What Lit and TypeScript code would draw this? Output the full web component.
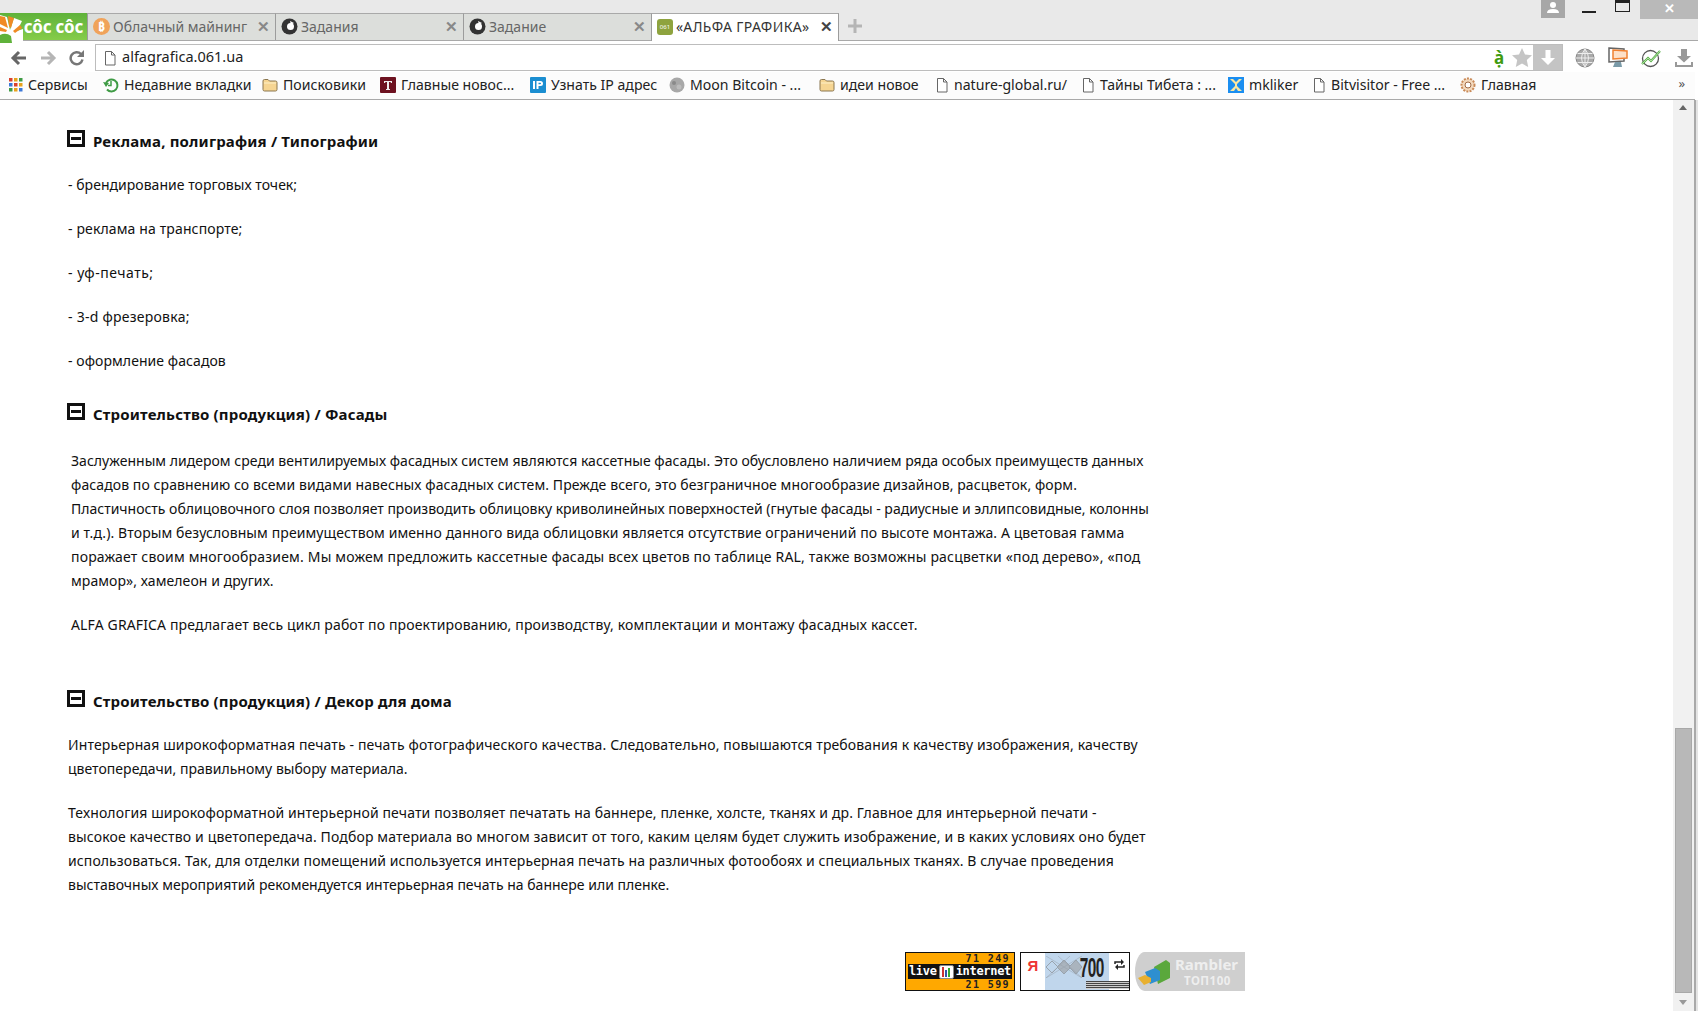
import { LitElement, html, css, svg } from "lit";
import { customElement } from "lit/decorators.js";

const fileIcon = svg`<svg width="14" height="16" viewBox="0 0 14 16"><path d="M2.5 1.5h6l3.500 3.500v10h-9.500z M8.500 1.500v3.500h3.500" fill="#fff" stroke="#666" stroke-width="1"/></svg>`;
const folderIcon = svg`<svg width="16" height="14" viewBox="0 0 16 14"><path d="M1 3q0-1.500 1.500-1.500h3.500l1.500 1.500h6q1.500 0 1.500 1.500v7q0 1.500-1.500 1.500h-11q-1.500 0-1.500-1.500z" fill="#f6d592" stroke="#8a7650"/><path d="M2 5h12" stroke="#fdf0c8"/></svg>`;
const dial = svg`<svg width="17" height="17" viewBox="0 0 17 17"><circle cx="8.500" cy="8.500" r="8" fill="#333"/><circle cx="9.500" cy="8.500" r="3.500" fill="#fff"/><path d="M9 3l4 2-3 2z" fill="#fff"/></svg>`;

const bookmarks: [any, string, number][] = [
  [svg`<svg width="14" height="14" viewBox="0 0 14 14">${[0, 5, 10].flatMap((y, r) => [0, 5, 10].map((x, c) => svg`<rect x="${x}" y="${y}" width="3.500" height="3.500" fill="${["#d9412f", "#e8a21c", "#3f9b45", "#3c78d8", "#d9412f", "#e8a21c", "#3f9b45", "#e8a21c", "#3c78d8"][r * 3 + c]}"/>`))}</svg>`, "Сервисы", 94],
  [svg`<svg width="16" height="16" viewBox="0 0 16 16"><path d="M3 6a6 6 0 1 1 1 6.500" fill="none" stroke="#3f9b45" stroke-width="2"/><path d="M0 5l6 1-3 4z" fill="#3f9b45"/><path d="M8 4v4.500h-3" fill="none" stroke="#3f9b45" stroke-width="1.500"/></svg>`, "Недавние вкладки", 159],
  [folderIcon, "Поисковики", 118],
  [svg`<svg width="16" height="16" viewBox="0 0 16 16"><rect width="16" height="16" rx="1" fill="#6d1220"/><path d="M4 4h8v2h-1l-.5-1h-1.500v7h1v1h-4v-1h1v-7h-1.500l-.5 1h-1z" fill="#eee"/></svg>`, "Главные новос...", 150],
  [svg`<svg width="16" height="16" viewBox="0 0 16 16"><rect width="16" height="16" rx="1" fill="#1b8ed1"/><path d="M3 4h2v8h-2z M6.500 4h4q2.500 0 2.500 2.500t-2.500 2.500h-2v3h-2z M8.500 5.800v1.500h1.500q1 0 1-.8t-1-.7z" fill="#fff"/></svg>`, "Узнать IP адрес", 139],
  [svg`<svg width="16" height="16" viewBox="0 0 16 16"><circle cx="8" cy="8" r="7.500" fill="#a8a8a8"/><circle cx="5" cy="6" r="2" fill="#8a8a8a"/><circle cx="10" cy="10" r="2.500" fill="#bcbcbc"/></svg>`, "Moon Bitcoin - ...", 150],
  [folderIcon, "идеи новое", 116],
  [fileIcon, "nature-global.ru/", 146],
  [fileIcon, "Тайны Тибета : ...", 147],
  [svg`<svg width="16" height="16" viewBox="0 0 16 16"><rect width="16" height="16" fill="#1b8ef0"/><path d="M2 2l5 5v2l-5 5h4l2-3 2 3h4l-5-5v-2l5-5h-3l-3 3-3-3z" fill="#fbe7a0"/></svg>`, "mkliker", 84],
  [fileIcon, "Bitvisitor - Free ...", 148],
  [svg`<svg width="16" height="16" viewBox="0 0 16 16"><circle cx="8" cy="8" r="6.500" fill="#f3d9bd" stroke="#c98a58" stroke-width="2" stroke-dasharray="2 1.200"/><circle cx="8" cy="8" r="3" fill="#fff" stroke="#a06a45"/></svg>`, "Главная", 90],
];

const ln = (text: string, ls: number) => html`<span class="ln" style="letter-spacing:${ls}px">${text}</span>`;

const fasady: [string, number][] = [
  ["Заслуженным лидером среди вентилируемых фасадных систем являются кассетные фасады. Это обусловлено наличием ряда особых преимуществ данных", 0.03],
  ["фасадов по сравнению со всеми видами навесных фасадных систем. Прежде всего, это безграничное многообразие дизайнов, расцветок, форм.", 0.09],
  ["Пластичность облицовочного слоя позволяет производить облицовку криволинейных поверхностей (гнутые фасады - радиусные и эллипсовидные, колонны", -0.008],
  ["и т.д.). Вторым безусловным преимуществом именно данного вида облицовки является отсутствие ограничений по высоте монтажа. А цветовая гамма", 0.1],
  ["поражает своим многообразием. Мы можем предложить кассетные фасады всех цветов по таблице RAL, также возможны расцветки «под дерево», «под", 0.185],
  ["мрамор», хамелеон и других.", 0.08],
];
const decor1: [string, number][] = [
  ["Интерьерная широкоформатная печать - печать фотографического качества. Следовательно, повышаются требования к качеству изображения, качеству", 0.125],
  ["цветопередачи, правильному выбору материала.", 0.024],
];
const decor2: [string, number][] = [
  ["Технология широкоформатной интерьерной печати позволяет печатать на баннере, пленке, холсте, тканях и др. Главное для интерьерной печати -", 0.125],
  ["высокое качество и цветопередача. Подбор материала во многом зависит от того, каким целям будет служить изображение, и в каких условиях оно будет", 0.145],
  ["использоваться. Так, для отделки помещений используется интерьерная печать на различных фотообоях и специальных тканях. В случае проведения", 0.1],
  ["выставочных мероприятий рекомендуется интерьерная печать на баннере или пленке.", 0.01],
];
const bullets: [string, number][] = [
  ["- брендирование торговых точек;", 0.03],
  ["- реклама на транспорте;", 0.13],
  ["- уф-печать;", 0.5],
  ["- 3-d фрезеровка;", 0.25],
  ["- оформление фасадов", 0.07],
];

@customElement("app-root")
export class AppRoot extends LitElement {
  static styles = css`
    :host { display: block; width: 1698px; height: 1011px; overflow: hidden; background: #fff; font-family: "Noto Sans", sans-serif; color: #111; }
    .frame { display: flex; flex-direction: column; height: 1011px; }

    .titlebar { position: relative; height: 41px; flex: none; background: #e9e9e9; box-sizing: border-box; padding-top: 13px; display: flex; align-items: stretch; border-bottom: 1px solid #a9a9a9; }
    .brand { width: 87px; background: linear-gradient(#5fb23a, #86cc4a); position: relative; color: #fff; font: bold 17px/27px "Noto Sans", sans-serif; text-align: right; padding-right: 4px; box-sizing: border-box; white-space: nowrap; letter-spacing: -0.2px; z-index: 1; }
    .brand svg { position: absolute; left: 0; top: 0; }
    .tab { width: 188px; box-sizing: border-box; border-left: 1px solid #9c9c9c; border-top: 1px solid #a9a9a9; background: #dcdedb; display: flex; align-items: center; padding: 0 5px 2px 5px; gap: 3px; font-size: 14px; color: #666; white-space: nowrap; }
    .tab .label { flex: 1; overflow: hidden; }
    .tab .x { color: #888; font-size: 15px; font-weight: bold; line-height: 1; }
    .tab.active { background: #fff; color: #333; height: 28px; margin-bottom: -1px; border-right: 1px solid #9c9c9c; position: relative; padding-top: 0; }
    .tab.active .label { letter-spacing: 0.38px; }
    .tab.active .x { color: #444; }
    .favicon { width: 16px; height: 16px; border-radius: 3px; background: #8ea33e; color: #fff; font-size: 6px; text-align: center; line-height: 16px; flex: none; }
    .btc { width: 17px; height: 17px; border-radius: 50%; background: #f0a35a; color: #fff; font-size: 12px; font-weight: bold; text-align: center; line-height: 17px; flex: none; }
    .plus { margin-left: 9px; align-self: center; margin-bottom: 1px; }

    .winctl { position: absolute; top: 0; right: 0; height: 19px; width: 158px; }
    .user { position: absolute; left: 1px; top: 0; width: 24px; height: 18px; background: #a7a7a7; }
    .min { position: absolute; left: 42px; top: 11px; width: 14px; height: 2px; background: #222; }
    .max { position: absolute; left: 75px; top: 0; width: 13px; height: 8px; border: 1px solid #222; border-top-width: 3px; }
    .close { position: absolute; left: 100px; top: 0; width: 58px; height: 19px; background: #b9b9b9; color: #fff; font: bold 13px/17px "Noto Sans", sans-serif; text-align: center; }

    .toolbar { height: 31px; flex: none; display: flex; align-items: flex-end; padding-bottom: 1px; box-sizing: border-box; background: #fff; margin-right: 3px; }
    .nav { width: 95px; height: 27px; display: flex; align-items: center; padding-left: 10px; gap: 12.500px; box-sizing: border-box; flex: none; }
    .omni { width: 1468px; height: 27px; flex: none; border: 1px solid #bdbdbd; box-sizing: border-box; display: flex; align-items: center; padding-left: 7px; font-size: 14.500px; color: #222; position: relative; }
    .omni .url { flex: 1; margin-left: 5px; line-height: 23px; height: 25px; }
    .omni .a { color: #3f9b10; font-weight: bold; font-size: 17px; width: 20px; text-align: center; margin-right: 3px; }
    .star { margin-right: 1px; }
    .dl { width: 29px; height: 25px; background: #c4c4c4; display: flex; align-items: center; justify-content: center; }
    .ext { display: flex; gap: 13px; padding-left: 12px; align-items: center; height: 27px; }

    .bookmarks { height: 28px; flex: none; box-sizing: border-box; display: flex; align-items: center; padding: 0 0 2px 9px; border-bottom: 1px solid #a9a9a9; font-size: 14.100px; color: #222; white-space: nowrap; background: #fcfcfc; position: relative; margin-right: 3px; }
    .bm { display: flex; align-items: center; gap: 5px; flex: none; }
    .more { position: absolute; right: 10px; top: 2px; color: #555; font-size: 13px; }

    .viewport { flex: 1; display: flex; min-height: 0; }
    .content { flex: 1; position: relative; padding: 0 0 0 68px; font-size: 14px; line-height: 24px; color: #111; box-sizing: border-box; }
    .sec-head { display: flex; align-items: flex-start; gap: 8px; font-size: 15px; line-height: 22px; letter-spacing: 0.17px; font-weight: bold; height: 24px; margin: 0 0 19px -1px; white-space: nowrap; }
    .sec-head.tight { margin-bottom: 22px; }
    .minus { width: 18px; height: 17px; box-sizing: border-box; border: 3px solid #111; position: relative; flex: none; }
    .minus::after { content: ""; position: absolute; left: 1px; right: 1px; top: 4px; height: 3px; background: #111; }
    p { margin: 0 0 20px; white-space: nowrap; }
    .ln { display: block; }
    .indent { padding-left: 3px; }
    .badges { position: absolute; left: 905px; top: 852px; display: flex; gap: 5px; }

    .li { width: 110px; height: 39px; box-sizing: border-box; border: 1px solid #111; background: #ffa800; font: bold 10px/11px "DejaVu Sans Mono", monospace; color: #222; text-align: right; }
    .li .num { padding-right: 4px; letter-spacing: 1.400px; }
    .li .strip { background: #111; color: #fff; font: bold 12px/15px "DejaVu Sans Mono", monospace; margin: 0 2px; display: flex; align-items: center; justify-content: center; gap: 2px; letter-spacing: -0.3px; height: 15px; }
    .li .strip i { display: flex; align-items: flex-end; gap: 1px; width: 15px; height: 14px; box-sizing: border-box; padding: 1px 2px; border: 1px solid #888; background: #fff; border-radius: 2px; flex: none; }
    .li .strip b { width: 2px; display: block; }

    .ya { width: 110px; height: 39px; box-sizing: border-box; border: 1px solid #111; background: #fff; display: flex; position: relative; overflow: hidden; }
    .ya .y { width: 24px; color: #e33; font: bold 15px/26px "Liberation Sans", sans-serif; text-align: center; flex: none; }
    .ya .blue { width: 64px; flex: none; background: #c0d6ec; position: relative; }
    .ya .blue svg { position: absolute; left: 1px; top: 3px; }
    .ya .seven { position: absolute; right: 5px; top: 0; font: bold 28px/30px "Liberation Sans", sans-serif; color: #222; transform: scaleX(0.55); transform-origin: right center; letter-spacing: -1px; }
    .ya .r { flex: 1; display: flex; justify-content: center; padding-top: 6px; }
    .ya .lines { position: absolute; right: 0; bottom: 1px; width: 43px; height: 8px; background: repeating-linear-gradient(#444 0 1px, #ccc 1px 2px); }

    .ra { width: 110px; height: 39px; background: #cfcfcf; color: #eee; position: relative; font: bold 15px/21px "Noto Sans", sans-serif; padding: 2px 0 0 40px; box-sizing: border-box; border-radius: 10px 0 0 10px / 20px 0 0 20px; }
    .ra small { display: block; font-size: 11.500px; line-height: 11px; padding-left: 9px; letter-spacing: 0.5px; }
    .ra svg { position: absolute; left: 3px; top: 8px; }

    .scroll { width: 21px; flex: none; background: #f1f1f1; position: relative; }
    .edge { width: 4px; flex: none; background: linear-gradient(90deg, #a9a9a9 0 2px, #e4e4e4 2px); }
    .thumb { position: absolute; left: 2px; right: 2px; bottom: 18px; height: 265px; background: #b8b8b8; border: 1px solid #a8a8a8; box-sizing: border-box; }
    .arr { position: absolute; left: 6px; width: 0; height: 0; border-left: 4px solid transparent; border-right: 4px solid transparent; }
    .arr.up { top: 5px; border-bottom: 5px solid #666; }
    .arr.down { bottom: 6px; border-top: 5px solid #999; }
  `;

  render() {
    return html`<div class="frame">
      <div class="titlebar">
        <div class="brand">
          <svg width="23" height="30" viewBox="0 0 23 30"><path d="M0 2l7 2 3 13 4-12 8 3-5 10 6-2v14h-23z" fill="#fff"/><path d="M0 3l5 1 3 11-8-4z" fill="#f08a24"/><path d="M9 13l-1-10 6 2-3 10z" fill="#f08a24"/><path d="M0 14l7 3-1 2-6-1z" fill="#f08a24"/><path d="M13 18l7-6 2 3-7 5z" fill="#f08a24"/><path d="M0 22q6-3 11 1l1 7h-12z" fill="#5fb23a"/></svg>
          côc côc
        </div>
        <div class="tab"><span class="btc">₿</span><span class="label">Облачный майнинг</span><span class="x">✕</span></div>
        <div class="tab">${dial}<span class="label">Задания</span><span class="x">✕</span></div>
        <div class="tab">${dial}<span class="label">Задание</span><span class="x">✕</span></div>
        <div class="tab active"><span class="favicon">061</span><span class="label">«АЛЬФА ГРАФИКА»</span><span class="x">✕</span></div>
        <svg class="plus" width="14" height="14" viewBox="0 0 14 14"><path d="M5.500 0h3v5.500h5.500v3h-5.500v5.500h-3v-5.500h-5.500v-3h5.500z" fill="#b5b5b5"/></svg>
        <div class="winctl">
          <div class="user"><svg width="24" height="18" viewBox="0 0 24 18"><circle cx="12" cy="5" r="3" fill="#fff"/><path d="M6 13q0-4 6-4t6 4z" fill="#fff"/></svg></div>
          <div class="min"></div><div class="max"></div>
          <div class="close">✕</div>
        </div>
      </div>

      <div class="toolbar">
        <div class="nav">
          <svg width="17" height="16" viewBox="0 0 17 16"><path d="M16 8h-12M9 2l-6 6 6 6" fill="none" stroke="#666" stroke-width="3"/></svg>
          <svg width="17" height="16" viewBox="0 0 17 16"><path d="M1 8h12M8 2l6 6-6 6" fill="none" stroke="#b5b5b5" stroke-width="3"/></svg>
          <svg width="16" height="16" viewBox="0 0 16 16"><path d="M13.500 9.500a6 6 0 1 1-1.500-5.500" fill="none" stroke="#777" stroke-width="2.500"/><path d="M15 0v7h-7z" fill="#777"/></svg>
        </div>
        <div class="omni">
          ${fileIcon}<span class="url">alfagrafica.061.ua</span>
          <span class="a">ạ̀</span>
          <svg class="star" width="20" height="19" viewBox="0 0 20 19"><path d="M10 0l3 6.500 7 .8-5.200 4.700 1.400 7-6.200-3.500-6.200 3.500 1.400-7-5.200-4.700 7-.8z" fill="#c5c5c5"/></svg>
          <div class="dl"><svg width="14" height="15" viewBox="0 0 14 15"><path d="M4.500 0h5v8h4.500l-7 7-7-7h4.500z" fill="#fff"/></svg></div>
        </div>
        <div class="ext">
          <svg width="20" height="20" viewBox="0 0 20 20"><circle cx="10" cy="10" r="9" fill="#a9a9a9" stroke="#888"/><path d="M1 10h18M2.500 5.500h15M2.500 14.500h15M10 1v18M10 1q-7 9 0 18M10 1q7 9 0 18" fill="none" stroke="#eee"/></svg>
          <svg width="20" height="21" viewBox="0 0 20 21"><path d="M1 1l15 1v12l-15 1z" fill="#fff" stroke="#666" stroke-width="1.500"/><path d="M5 3l14 1v7l-14 1z" fill="#fde0c8" stroke="#f08030" stroke-width="1.500"/><path d="M7 15l-2 5h9l-1-5z" fill="#7a9aa8"/></svg>
          <svg width="20" height="20" viewBox="0 0 20 20"><circle cx="9.500" cy="10.500" r="8" fill="none" stroke="#555" stroke-width="1.300"/><path d="M1 16l6-6 3 3 9-10" fill="none" stroke="#58b048" stroke-width="2.200"/><path d="M1 16l6-6 3 3 9-10" fill="none" stroke="#d5efc9" stroke-width="0.700"/></svg>
          <svg style="margin-left:1px" width="18" height="18" viewBox="0 0 18 18"><path d="M6 0h6v7h4l-7 6.500-7-6.500h4z" fill="#999"/><path d="M1 13v4h16v-4" fill="none" stroke="#999" stroke-width="2"/></svg>
        </div>
      </div>

      <div class="bookmarks">
        ${bookmarks.map(([i, t, w]) => html`<div class="bm" style="width:${w}px">${i}<span>${t}</span></div>`)}
        <span class="more">»</span>
      </div>

      <div class="viewport">
        <div class="content">
          <div class="sec-head" style="margin-top:30px"><span class="minus"></span><span>Реклама, полиграфия / Типографии</span></div>
          ${bullets.map(([t, s]) => html`<p>${ln(t, s)}</p>`)}
          <div class="sec-head tight" style="margin-top:30px"><span class="minus"></span><span>Строительство (продукция) / Фасады</span></div>
          <div class="indent">
            <p>${fasady.map(([t, s]) => ln(t, s))}</p>
            <p>${ln("ALFA GRAFICA предлагает весь цикл работ по проектированию, производству, комплектации и монтажу фасадных кассет.", 0.14)}</p>
          </div>
          <div class="sec-head" style="margin-top:53px"><span class="minus"></span><span>Строительство (продукция) / Декор для дома</span></div>
          <p>${decor1.map(([t, s]) => ln(t, s))}</p>
          <p>${decor2.map(([t, s]) => ln(t, s))}</p>
          <div class="badges">
            <div class="li">
              <div class="num">71 249</div>
              <div class="strip"><span>live</span><i><b style="height:10px;background:#c33"></b><b style="height:7px;background:#35a"></b><b style="height:9px;background:#3a3"></b></i><span>internet</span></div>
              <div class="num">21 599</div>
            </div>
            <div class="ya">
              <span class="y">Я</span>
              <span class="blue">
                <svg width="36" height="22" viewBox="0 0 36 22"><g fill="#aab4be" stroke="#99a3ad"><path d="M6 5l6 6-6 6-6-6z" fill="none"/><path d="M18 4l7 7-7 7-7-7z"/><path d="M30 4l6 7-6 7-7-7z"/></g><path d="M0 0l36 22M0 22l36-22M12 0l24 22M24 0l-24 22" stroke="#99a3ad" stroke-width="0.500" fill="none"/></svg>
                <span class="seven">700</span>
              </span>
              <span class="r"><svg width="11" height="11" viewBox="0 0 11 11"><path d="M1 5v-2h7M10 6v2h-7" fill="none" stroke="#222" stroke-width="1.500"/><path d="M7 0l3 3-3 3zM4 5l-3 3 3 3z" fill="#222"/></svg></span>
              <span class="lines"></span>
            </div>
            <div class="ra">
              <svg width="32" height="26" viewBox="0 0 32 26"><path d="M16 7l12-7 4 3v15l-12 6z" fill="#5aa83c"/><path d="M7 12l10-4 5 3v9l-10 4z" fill="#2e8fd0"/><path d="M0 18l7-3 6 3v4l-7 3z" fill="#e8b030"/></svg>
              Rambler<small>ТОП100</small>
            </div>
          </div>
        </div>
        <div class="scroll"><span class="arr up"></span><div class="thumb"></div><span class="arr down"></span></div>
        <div class="edge"></div>
      </div>
    </div>`;
  }
}
